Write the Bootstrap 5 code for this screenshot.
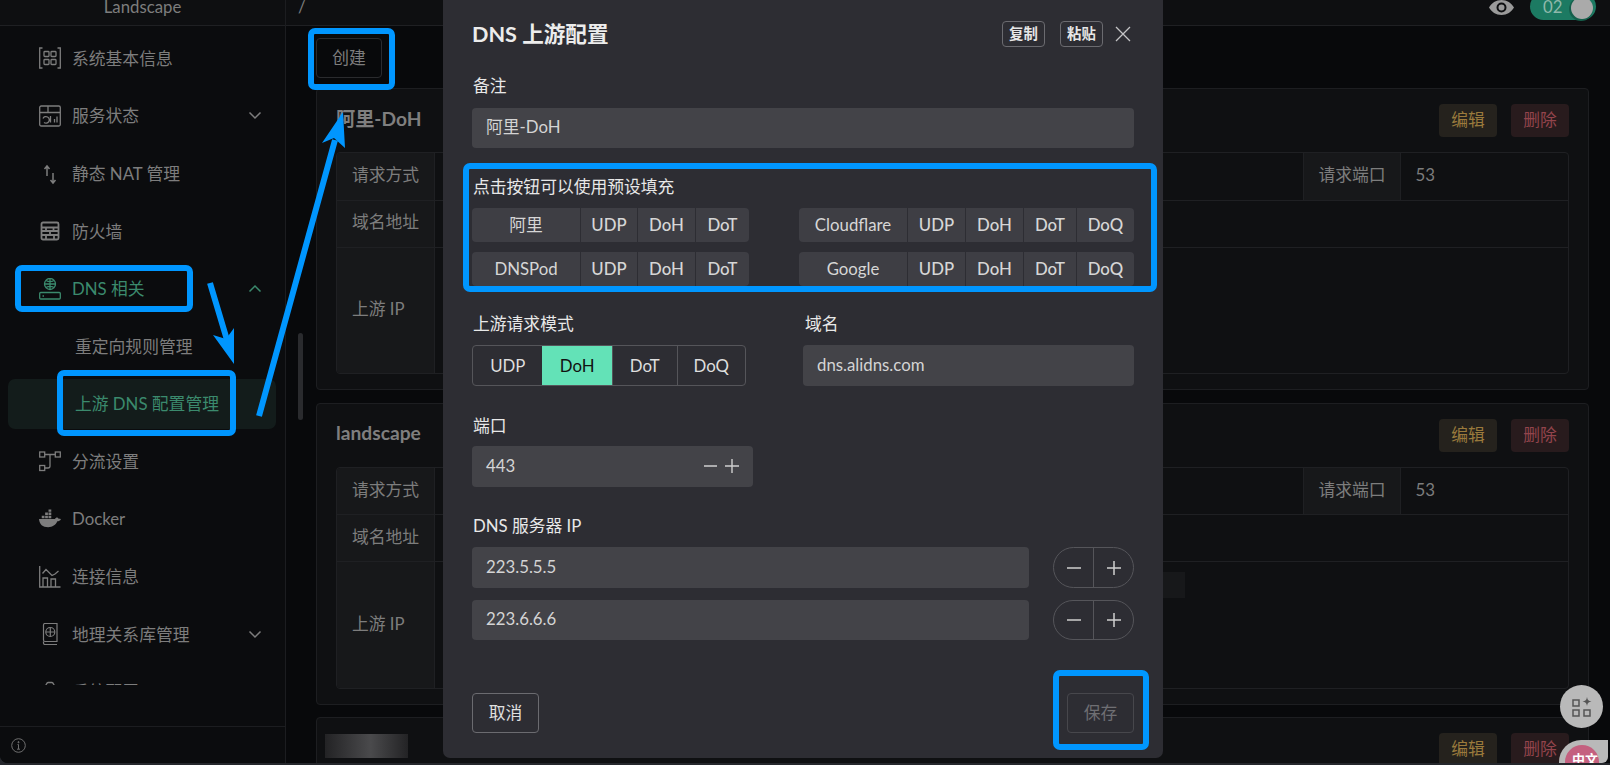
<!DOCTYPE html>
<html lang="zh">
<head>
<meta charset="utf-8">
<title>Landscape</title>
<link href="https://cdn.jsdelivr.net/npm/bootstrap@5.3.0/dist/css/bootstrap.min.css" rel="stylesheet">
<style>
html,body{height:765px;overflow:hidden;}
body{margin:0;background:#25272c;font-family:Lato,"Noto Sans CJK SC",sans-serif;font-size:16.8px;color:#7d7d7d;position:relative;}
.app{height:763px;overflow:hidden;border-bottom-left-radius:8px;background:#08090b;}
.side{width:286px;flex:none;background:#0b0c0e;border-right:1px solid #1c1d20;}
.hd{height:26px;flex:none;background:#0e0f11;border-bottom:1px solid #1f2023;overflow:hidden;}
.hd-line{height:14px;line-height:14px;}
.side-nav{height:659px;overflow:hidden;padding:0 9px 0 8px;}
.nav-row{height:50.4px;margin-top:7.2px;padding-left:31px;padding-right:14px;border-radius:7px;color:#7d7d7d;}
.nav-row .ic{width:22px;height:22px;margin-right:11px;flex:none;}
.nav-row.sub{padding-left:67px;}
.nav-row.green{color:#3b8a6d;}
.nav-row.cur{background:#131c1b;color:#3b8a6d;}
.nav-row .chev{margin-left:auto;}
.side-foot{height:37px;margin-top:auto;border-top:1px solid #1c1d20;padding-left:11px;}
.main{min-width:0;}
.crumb{padding-left:12px;}
.hd-right{margin-left:auto;margin-right:14px;}
.eye{margin-right:16px;}
.sw{width:66px;height:27px;margin-top:-7px;border-radius:14px;background:#1c7a62;color:#8fb8aa;padding:7px 3px 0 13px;line-height:14px;}
.knob{width:22px;height:22px;margin-top:-3px;margin-left:auto;border-radius:50%;background:#aaa;box-shadow:-1px 1px 0 1px #15604c;}
.scroll-body{padding:12px 21px 0 30px;}
.mk-btn{width:66px;height:40px;padding:0;font-size:16.8px;background:transparent;border:1px solid #2a2b2e;color:#7d7d7d;border-radius:4px;margin-bottom:10px;}
.mk-btn:hover{background:transparent;color:#7d7d7d;border-color:#2a2b2e;}
.bar-thumb{position:absolute;left:298px;top:333px;width:5px;height:87px;border-radius:3px;background:#2a2b2e;}
.rule-card{background:#0f1012;border:1px solid #1d1e21;border-radius:4px;padding:15px 19px;margin-bottom:12.6px;color:#7d7d7d;}
.rule-top{height:33px;margin-bottom:15px;}
.rule-name{font-size:19.2px;font-weight:700;color:#7f7f7f;padding-bottom:3px;}
.act{width:58px;height:33px;padding:0 0 2px;font-size:16.8px;border:0;border-radius:4px;}
.act-edit,.act-edit:hover{background:#25221d;color:#9a7a3c;}
.act-del,.act-del:hover{background:#281b1d;color:#93444c;margin-left:14px;}
.info-wrap{border:1px solid #1f2023;border-radius:4px;overflow:hidden;}
.info{--bs-table-bg:transparent;--bs-table-color:#7d7d7d;--bs-border-color:#1f2023;table-layout:fixed;width:100%;margin:0;font-size:16.8px;color:#7d7d7d;}
.info th,.info td{padding:0 0 3px 15px;font-weight:400;vertical-align:middle;border-bottom:1px solid #1f2023;color:#7d7d7d;background:transparent;box-shadow:none;white-space:nowrap;}
.info tr:last-child th,.info tr:last-child td{border-bottom:0;}
.info th{width:97px;background:#17181a;border-right:1px solid #1f2023;}
.info th.wide-l{border-left:1px solid #1f2023;}
.info .val-last{width:168px;}
.info .r1{height:47px;}
.info .r3{height:126px;}
.info td.pill-cell{vertical-align:top;padding-top:10px;}
.ip-pill{display:block;width:735px;height:26px;background:#17181a;}
.blur-name{width:83px;height:24px;margin:1px 0 0 -11px;align-self:flex-start;background:linear-gradient(90deg,#232325,#4a4a4c 55%,#232325);}
.dlg{position:absolute;left:443px;top:0;width:720px;height:758px;background:#2d2d33;border:0;border-radius:0 0 7px 7px;padding:0 29px;color:#e6e6e6;z-index:5;}
.dlg-head{height:68px;}
.dlg-title{font-size:21.6px;font-weight:700;color:#ececec;}
.tiny{width:43px;height:26px;padding:0;font-size:14.4px;font-weight:700;line-height:1;color:#e6e6e6;background:transparent;border:1px solid #6b6b70;border-radius:4px;margin-left:15px;}
.tiny:hover{color:#e6e6e6;background:transparent;border-color:#6b6b70;}
.cross{margin-left:12px;margin-right:3px;}
.fld{line-height:24px;color:#e8e8e8;padding-left:1px;}
.inp{display:flex;align-items:center;height:41px;padding:0 14px 2px;background:#434348;border:0;border-radius:4px;color:#d4d4d4;font-size:16.8px;}
.inp:focus{background:#434348;color:#d4d4d4;}
.inp-h40{height:40px;}
.preset{height:34px;background:#3e3e44;border-radius:4px;overflow:hidden;color:#d6d6d6;}
.preset span{display:flex;align-items:center;justify-content:center;height:100%;border-left:1px solid #2d2d33;font-weight:500;}
.preset span:first-child{border-left:0;font-weight:400;width:108px;}
.p-left{width:277px;}
.p-right{width:335px;}
.seg{height:41px;width:274px;border:1px solid #55555a;border-radius:4px;overflow:hidden;color:#dedede;}
.seg span{display:flex;align-items:center;justify-content:center;height:100%;border-left:1px solid #55555a;}
.seg span:first-child{border-left:0;}
.seg .on{background:#63e2b7;color:#111;border-left:0;}
.port{width:281px;}
.pm{width:81px;height:41px;border:1px solid #55555a;border-radius:21px;flex:none;}
.pm-h40{height:40px;}
.pm span{display:flex;flex:1;align-items:center;justify-content:center;height:100%;}
.pm span+span{border-left:1px solid #55555a;}
.foot-btn{width:67px;height:40px;padding:0;font-size:16.8px;border-radius:4px;}
.foot-cancel,.foot-cancel:hover{background:transparent;border:1px solid #6b6b70;color:#e0e0e0;}
.foot-save,.foot-save:disabled{background:transparent;border:1px solid #47474c;color:#6f6f73;opacity:1;}
.marks{position:absolute;left:0;top:0;z-index:8;pointer-events:none;}
.fab{position:absolute;left:1560px;top:685px;width:43px;height:43px;border-radius:50%;background:#b9b9b9;z-index:9;}
.lang{position:absolute;left:1559px;top:740px;width:49px;height:23px;background:#b9b9b9;border-radius:22px 0 6px 0;overflow:hidden;z-index:9;}
.lang-dot{width:34px;height:34px;margin:5px 0 0 6px;border-radius:50%;background:#c4607f;color:#fff;font-size:13px;font-weight:700;line-height:15px;padding:7px 0 0 7px;white-space:nowrap;overflow:hidden;}
</style>
</head>
<body>
<div class="app d-flex">
  <aside class="side d-flex flex-column">
    <div class="hd d-flex justify-content-center"><div class="hd-line">Landscape</div></div>
    <nav class="side-nav">
      <div class="nav-row d-flex align-items-center">
        <svg class="ic" viewBox="0 0 22 22" fill="none" stroke="currentColor" stroke-width="1.3"><path d="M3.500 1H.7v20h2.800M18.500 1h2.800v20h-2.800"/><rect x="5" y="4.500" width="5" height="5" rx=".8"/><rect x="12" y="4.500" width="5" height="5" rx=".8"/><rect x="5" y="12.500" width="5" height="5" rx=".8"/><rect x="12" y="12.500" width="5" height="5" rx=".8"/></svg>
        <span>系统基本信息</span>
      </div>
      <div class="nav-row d-flex align-items-center">
        <svg class="ic" viewBox="0 0 22 22" fill="none" stroke="currentColor" stroke-width="1.3"><rect x=".7" y="1" width="20.6" height="20" rx="1.5"/><path d="M.7 7.500h20.600M9 1v6.500M4 13.500a3.300 3.300 0 1 1 1 4M11.500 11v6.500M15.500 14v3.500M18 11.500v6"/></svg>
        <span>服务状态</span>
        <svg class="chev" width="14" height="9" viewBox="0 0 14 9" fill="none" stroke="currentColor" stroke-width="1.500"><path d="M1.500 1.500 7 7l5.500-5.500"/></svg>
      </div>
      <div class="nav-row d-flex align-items-center">
        <svg class="ic" viewBox="0 0 22 22" fill="none" stroke="currentColor" stroke-width="1.500"><path d="M8 13V3.500M5.500 6 8 3l2.500 3M14 10v9.500M11.500 17l2.500 3 2.500-3"/></svg>
        <span>静态 NAT 管理</span>
      </div>
      <div class="nav-row d-flex align-items-center">
        <svg class="ic" viewBox="0 0 22 22" fill="none" stroke="currentColor" stroke-width="1.800"><rect x="2.500" y="2.500" width="17" height="17" rx="1.500"/><path d="M2.500 7.500h17M2.500 11h17M2.500 15h17M7 7.500V11M14.500 7.500V11M11 11v4M7 15v4.500M15 15v4.500"/></svg>
        <span>防火墙</span>
      </div>
      <div class="nav-row green d-flex align-items-center">
        <svg class="ic" viewBox="0 0 22 22" fill="none" stroke="currentColor" stroke-width="1.300"><circle cx="11" cy="6" r="5.500"/><path d="M5.500 6h11M11 .5v11M7 2.500c2.500 1.500 5.500 1.500 8 0M7 9.500c2.500-1.500 5.500-1.500 8 0"/><rect x=".7" y="14.500" width="20.600" height="6.500" rx="1"/><path d="M3.500 18h1.500"/></svg>
        <span>DNS 相关</span>
        <svg class="chev" width="14" height="9" viewBox="0 0 14 9" fill="none" stroke="currentColor" stroke-width="1.500"><path d="M1.500 7.500 7 2l5.500 5.500"/></svg>
      </div>
      <div class="nav-row sub d-flex align-items-center">重定向规则管理</div>
      <div class="nav-row sub cur d-flex align-items-center">上游 DNS 配置管理</div>
      <div class="nav-row d-flex align-items-center">
        <svg class="ic" viewBox="0 0 22 22" fill="none" stroke="currentColor" stroke-width="1.300"><rect x=".7" y="2" width="5" height="5"/><rect x="16.300" y="2" width="5" height="5"/><rect x=".7" y="15.500" width="5" height="5"/><path d="M5.700 4.500h10.600M5.700 18H9a2 2 0 0 0 2-2V4.500"/></svg>
        <span>分流设置</span>
      </div>
      <div class="nav-row d-flex align-items-center">
        <svg class="ic" viewBox="0 0 24 22" fill="currentColor"><path d="M0 11h17.500c.5-1.500 2-2 3-1.500l.5 1 3 .5c-1 2-2.500 2.500-4 2.500-1.500 4-5.500 6.500-10 6.500C4 20 .5 17 0 11Z"/><path d="M3 7.500h3v2.700H3zM6.700 7.500h3v2.700h-3zM10.400 7.500h3v2.700h-3zM6.700 4h3v2.700h-3zM10.400 4h3v2.700h-3zM10.400.5h3v2.700h-3z" /></svg>
        <span>Docker</span>
      </div>
      <div class="nav-row d-flex align-items-center">
        <svg class="ic" viewBox="0 0 22 22" fill="none" stroke="currentColor" stroke-width="1.300"><path d="M.7 0v21h20.800M4 20.500V12h4.500v8.500M12 20.500V13h4.500v7.500M3.500 7.500 7 3.500l6 6 3-1.500 3.500-3"/></svg>
        <span>连接信息</span>
      </div>
      <div class="nav-row d-flex align-items-center">
        <svg class="ic" viewBox="0 0 22 22" fill="none" stroke="currentColor" stroke-width="1.200"><path d="M4.500 2a1.500 1.500 0 0 1 1.500-1.500h12v18H6a1.500 1.500 0 0 1-1.500-1.500Z"/><path d="M4.500 18.500v1.500A1.500 1.500 0 0 0 6 21.500h12"/><circle cx="11.300" cy="9" r="4.500"/><path d="M6.800 9h9M11.300 4.500v9"/></svg>
        <span>地理关系库管理</span>
        <svg class="chev" width="14" height="9" viewBox="0 0 14 9" fill="none" stroke="currentColor" stroke-width="1.500"><path d="M1.500 1.500 7 7l5.500-5.500"/></svg>
      </div>
      <div class="nav-row d-flex align-items-center">
        <svg class="ic" viewBox="0 0 22 22" fill="none" stroke="currentColor" stroke-width="1.300"><path d="M2 5h4c1 0 1.500-3.500 3-3.500h4c1.500 0 2 3.500 3 3.500h4"/></svg>
        <span>系统配置</span>
      </div>
    </nav>
    <div class="side-foot d-flex align-items-center">
      <svg width="15" height="15" viewBox="0 0 15 15" fill="none" stroke="#6f6f6f" stroke-width="1"><circle cx="7.500" cy="7.500" r="6.800"/><path d="M7.500 6.500v4.500M6 11.200h3M6.500 6.500h1"/><circle cx="7.500" cy="4.200" r=".6" fill="#6f6f6f"/></svg>
    </div>
  </aside>
  <div class="main flex-grow-1 d-flex flex-column">
    <div class="hd d-flex">
      <div class="hd-line crumb">/</div>
      <div class="hd-right d-flex">
        <svg class="eye" width="25" height="15" viewBox="0 0 25 15"><path fill="#9a9a9a" fill-rule="evenodd" d="M12.500 0C7 0 2.500 3 0 7.500 2.500 12 7 15 12.500 15S22.500 12 25 7.500C22.500 3 18 0 12.500 0Zm0 2.500a5 5 0 1 1 0 10 5 5 0 0 1 0-10Zm0 2a3 3 0 1 0 0 6 3 3 0 0 0 0-6Z"/></svg>
        <div class="sw d-flex"><span>02</span><div class="knob"></div></div>
      </div>
    </div>
    <div class="scroll-body">
      <button class="btn mk-btn" type="button">创建</button>

      <div class="rule-card">
        <div class="rule-top d-flex align-items-center">
          <div class="rule-name me-auto">阿里-DoH</div>
          <button class="btn act act-edit" type="button">编辑</button>
          <button class="btn act act-del" type="button">删除</button>
        </div>
        <div class="info-wrap">
          <table class="table info">
            <tr class="r1"><th>请求方式</th><td></td><th class="wide-l">请求端口</th><td class="val-last">53</td></tr>
            <tr class="r1"><th>域名地址</th><td colspan="3"></td></tr>
            <tr class="r3"><th>上游 IP</th><td colspan="3"></td></tr>
          </table>
        </div>
      </div>

      <div class="rule-card">
        <div class="rule-top d-flex align-items-center">
          <div class="rule-name me-auto">landscape</div>
          <button class="btn act act-edit" type="button">编辑</button>
          <button class="btn act act-del" type="button">删除</button>
        </div>
        <div class="info-wrap">
          <table class="table info">
            <tr class="r1"><th>请求方式</th><td></td><th class="wide-l">请求端口</th><td class="val-last">53</td></tr>
            <tr class="r1"><th>域名地址</th><td colspan="3"></td></tr>
            <tr class="r3"><th>上游 IP</th><td colspan="3" class="pill-cell"><i class="ip-pill"></i></td></tr>
          </table>
        </div>
      </div>

      <div class="rule-card">
        <div class="rule-top d-flex align-items-center">
          <div class="blur-name me-auto"></div>
          <button class="btn act act-edit" type="button">编辑</button>
          <button class="btn act act-del" type="button">删除</button>
        </div>
      </div>
    </div>
  </div>
</div>
<div class="bar-thumb"></div>

<section class="dlg modal-content d-block">
  <div class="dlg-head d-flex align-items-center">
    <div class="dlg-title me-auto">DNS 上游配置</div>
    <button class="btn tiny" type="button">复制</button>
    <button class="btn tiny" type="button">粘贴</button>
    <svg class="cross" width="16" height="16" viewBox="0 0 16 16" stroke="#c4c4c6" stroke-width="1.300" fill="none"><path d="M1 1l14 14M15 1 1 15"/></svg>
  </div>

  <div class="fld" style="margin-top:6px">备注</div>
  <div class="form-control inp inp-h40" style="margin-top:10px">阿里-DoH</div>

  <div class="fld" style="margin-top:27px">点击按钮可以使用预设填充</div>
  <div class="d-flex justify-content-between" style="margin-top:9px">
    <div class="preset p-left d-flex"><span>阿里</span><span style="width:57px">UDP</span><span style="width:58px">DoH</span><span style="width:54px">DoT</span></div>
    <div class="preset p-right d-flex"><span>Cloudflare</span><span style="width:58px">UDP</span><span style="width:58px">DoH</span><span style="width:53px">DoT</span><span style="width:58px">DoQ</span></div>
  </div>
  <div class="d-flex justify-content-between" style="margin-top:10px">
    <div class="preset p-left d-flex"><span>DNSPod</span><span style="width:57px">UDP</span><span style="width:58px">DoH</span><span style="width:54px">DoT</span></div>
    <div class="preset p-right d-flex"><span>Google</span><span style="width:58px">UDP</span><span style="width:58px">DoH</span><span style="width:53px">DoT</span><span style="width:58px">DoQ</span></div>
  </div>

  <div class="d-flex justify-content-between" style="margin-top:26px">
    <div>
      <div class="fld">上游请求模式</div>
      <div class="seg d-flex" style="margin-top:9px"><span style="width:70px">UDP</span><span class="on" style="width:70px">DoH</span><span style="width:65px">DoT</span><span style="width:69px">DoQ</span></div>
    </div>
    <div style="width:331px">
      <div class="fld" style="padding-left:2px">域名</div>
      <div class="form-control inp" style="margin-top:9px">dns.alidns.com</div>
    </div>
  </div>

  <div class="fld" style="margin-top:28px">端口</div>
  <div class="form-control inp port" style="margin-top:8px">
    <span class="me-auto">443</span>
    <svg width="36" height="14" viewBox="0 0 36 14" stroke="#cfcfcf" stroke-width="1.400" fill="none"><path d="M1 7h13M22 7h14M29 0v14"/></svg>
  </div>

  <div class="fld" style="margin-top:27px">DNS 服务器 IP</div>
  <div class="d-flex justify-content-between" style="margin-top:9px">
    <div class="form-control inp" style="width:557px">223.5.5.5</div>
    <div class="pm d-flex">
      <span><svg width="14" height="14" viewBox="0 0 14 14" stroke="#cfcfcf" stroke-width="1.500"><path d="M0 7h14"/></svg></span>
      <span><svg width="14" height="14" viewBox="0 0 14 14" stroke="#cfcfcf" stroke-width="1.500"><path d="M0 7h14M7 0v14"/></svg></span>
    </div>
  </div>
  <div class="d-flex justify-content-between" style="margin-top:12px">
    <div class="form-control inp inp-h40" style="width:557px">223.6.6.6</div>
    <div class="pm pm-h40 d-flex">
      <span><svg width="14" height="14" viewBox="0 0 14 14" stroke="#cfcfcf" stroke-width="1.500"><path d="M0 7h14"/></svg></span>
      <span><svg width="14" height="14" viewBox="0 0 14 14" stroke="#cfcfcf" stroke-width="1.500"><path d="M0 7h14M7 0v14"/></svg></span>
    </div>
  </div>

  <div class="d-flex justify-content-between" style="margin-top:53px">
    <button class="btn foot-btn foot-cancel" type="button">取消</button>
    <button class="btn foot-btn foot-save" type="button" disabled>保存</button>
  </div>
</section>

<svg class="marks" width="1610" height="765" viewBox="0 0 1610 765" fill="none" stroke="#0096ff" stroke-width="6">
  <rect x="311" y="31" width="81" height="56" rx="4"/>
  <rect x="18" y="268" width="172" height="41" rx="4"/>
  <rect x="60" y="373" width="173" height="60" rx="4"/>
  <rect x="466" y="166" width="688" height="123" rx="4"/>
  <rect x="1056" y="673" width="90" height="74" rx="4"/>
  <path d="M210 283 227 340M259 416 335 140"/>
  <path fill="#0096ff" stroke="none" d="M234 364 213 335 226 339 234 328ZM343 112 322 143 334 138 345 148Z"/>
</svg>

<div class="fab d-flex align-items-center justify-content-center">
  <svg width="20" height="20" viewBox="0 0 20 20" fill="none" stroke="#555" stroke-width="1.500"><rect x="1" y="3" width="6" height="6"/><rect x="1" y="13" width="6" height="6"/><rect x="12" y="13" width="6" height="6"/><path fill="#555" stroke="none" d="M15 0c.5 3 1.500 4 4.500 4.500-3 .5-4 1.500-4.500 4.500-.5-3-1.500-4-4.500-4.500C13.500 4 14.500 3 15 0Z"/></svg>
</div>
<div class="lang"><div class="lang-dot">中文</div></div>
</body>
</html>
